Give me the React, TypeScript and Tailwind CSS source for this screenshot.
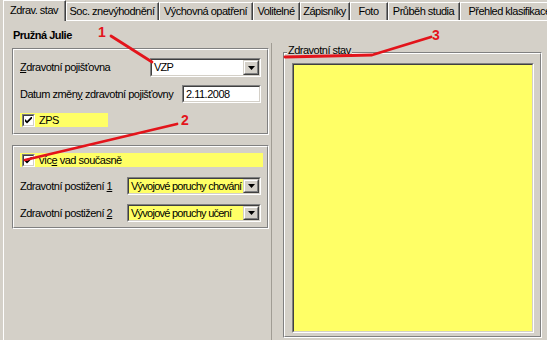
import React from "react";

const Check = () => (
  <div className="w-[13px] h-[13px] shrink-0 border-t border-l border-t-[#808080] border-l-[#808080] border-b border-r border-b-white border-r-white">
    <div className="w-full h-full border-t border-l border-t-[#404040] border-l-[#404040] border-b border-r border-b-[#d4d0c8] border-r-[#d4d0c8] bg-white flex items-center justify-center">
      <svg width="7" height="7" viewBox="0 0 7 7">
        <path d="M0 2 L2 4 L7 -1 L7 1.5 L2 6.5 L0 4.5 Z" fill="#000" />
      </svg>
    </div>
  </div>
);

const Sunken = ({ className = "", inner = "", children }: { className?: string; inner?: string; children?: React.ReactNode }) => (
  <div className={"border-t border-l border-t-[#808080] border-l-[#808080] border-b border-r border-b-white border-r-white " + className}>
    <div className={"w-full h-full border-t border-l border-t-[#404040] border-l-[#404040] border-b border-r border-b-[#d4d0c8] border-r-[#d4d0c8] " + inner}>
      {children}
    </div>
  </div>
);

const DropBtn = () => (
  <div className="w-[16px] h-full shrink-0 border-t border-l border-t-[#d4d0c8] border-l-[#d4d0c8] border-b border-r border-b-[#404040] border-r-[#404040]">
    <div className="w-full h-full bg-[#d4d0c8] border-t border-l border-t-white border-l-white border-b border-r border-b-[#808080] border-r-[#808080] flex items-center justify-center">
      <svg width="7" height="4" viewBox="0 0 7 4">
        <path d="M0 0 H7 L3.5 4 Z" fill="#000" />
      </svg>
    </div>
  </div>
);

const Combo = ({ text, w, h, bg }: { text: string; w: string; h: string; bg: string }) => (
  <Sunken className={w + " " + h} inner={"flex " + bg}>
    <div className="flex-1 overflow-hidden whitespace-nowrap pl-[2px] flex items-center tracking-[-0.75px]">{text}</div>
    <DropBtn />
  </Sunken>
);

const Etched = ({ className = "", children }: { className?: string; children?: React.ReactNode }) => (
  <div className={"relative border-t border-l border-t-[#808080] border-l-[#808080] border-b border-r border-b-white border-r-white " + className}>
    <div className="w-full h-full border-t border-l border-t-white border-l-white border-b border-r border-b-[#808080] border-r-[#808080] flex flex-col">
      {children}
    </div>
  </div>
);

const Tab = ({ label, w }: { label: string; w: string }) => (
  <div className={"mt-[2px] h-[18px] shrink-0 border-l border-t border-l-white border-t-white border-r border-r-[#404040] flex " + w}>
    <div className="flex-1 border-r border-r-[#808080] flex items-center justify-center whitespace-nowrap overflow-hidden">{label}</div>
  </div>
);

export default function App() {
  return (
    <div className="relative w-[547px] h-[340px] overflow-hidden bg-[#d4d0c8] text-black font-['Liberation_Sans',Arial,sans-serif] text-[11px] leading-[13px] tracking-[-0.5px] flex flex-col">
      {/* Tabs */}
      <div className="h-[20px] flex items-start shrink-0 relative z-10">
        <div className="ml-[3px] w-[63px] h-[21px] shrink-0 bg-[#d4d0c8] border-l border-t border-l-white border-t-white border-r border-r-[#404040] flex">
          <div className="flex-1 border-r border-r-[#808080] flex items-start justify-center pt-[3px] whitespace-nowrap">Zdrav. stav</div>
        </div>
        <Tab label="Soc. znevýhodnění" w="w-[93px]" />
        <Tab label="Výchovná opatření" w="w-[94px]" />
        <Tab label="Volitelné" w="w-[47px]" />
        <Tab label="Zápisníky" w="w-[50px]" />
        <Tab label="Foto" w="w-[38px]" />
        <Tab label="Průběh studia" w="w-[72px]" />
        <Tab label="Přehled klasifikace" w="w-[100px]" />
      </div>

      {/* Body */}
      <div className="flex-1 ml-[3px] border-l border-t border-white flex">
        {/* Left column */}
        <div className="w-[267px] shrink-0 pl-[8px] flex flex-col">
          <div className="ml-[1px] mt-[8px] font-bold h-[13px]">Pružná Julie</div>

          <Etched className="mt-[6px] w-[257px] h-[87px]">
            <div className="pl-[6px] pr-[6px] pt-[8px] flex flex-col">
              <div className="flex items-center h-[19px]">
                <div className="flex-1">
                  <span className="underline">Z</span>dravotní pojišťovna
                </div>
                <Combo text="VZP" w="w-[111px]" h="h-[19px]" bg="bg-white" />
              </div>
              <div className="mt-[8px] flex items-center h-[18px]">
                <div className="flex-1">
                  Datum změn<span className="underline">y</span> zdravotní pojišťovny
                </div>
                <Sunken className="w-[79px] h-[18px]" inner="bg-white flex items-center pl-[2px]">
                  2.11.2008
                </Sunken>
              </div>
              <div className="mt-[10px] h-[14px] w-[88px] bg-[#ffff66] flex items-center pl-[2px] gap-[4px]">
                <Check />
                <span>ZPS</span>
              </div>
            </div>
          </Etched>

          <Etched className="mt-[10px] w-[257px] h-[84px]">
            <div className="pl-[6px] pr-[6px] pt-[6px] flex flex-col">
              <div className="h-[14px] w-[243px] bg-[#ffff66] flex items-center pl-[2px] gap-[4px]">
                <Check />
                <span>
                  víc<span className="underline">e</span> vad současně
                </span>
              </div>
              <div className="mt-[10px] flex items-center h-[18px]">
                <div className="flex-1">
                  Zdravotní postižení <span className="underline">1</span>
                </div>
                <Combo text="Vývojové poruchy chování" w="w-[134px]" h="h-[18px]" bg="bg-[#ffff66]" />
              </div>
              <div className="mt-[9px] flex items-center h-[18px]">
                <div className="flex-1">
                  Zdravotní postižení <span className="underline">2</span>
                </div>
                <Combo text="Vývojové poruchy učení" w="w-[134px]" h="h-[18px]" bg="bg-[#ffff66]" />
              </div>
            </div>
          </Etched>
        </div>

        {/* Right column */}
        <div className="flex-1 flex">
          <div className="w-[1px] mt-[22px] bg-[#a09c94] self-stretch" />
          <div className="ml-[11px] mt-[31px]">
            <Etched className="w-[259px] h-[286px]">
              <div className="absolute left-[3px] top-[-9px] px-[1px] bg-[#d4d0c8] h-[13px] whitespace-nowrap">Zdravotní stav</div>
              <div className="flex-1 flex ml-[7px] mt-[9px] mr-[6px] mb-[3px]">
                <Sunken className="flex-1" inner="bg-[#ffff66]" />
              </div>
            </Etched>
          </div>
        </div>
      </div>

      {/* Red annotations overlay */}
      <svg className="absolute inset-0 pointer-events-none" width="547" height="340" viewBox="0 0 547 340">
        <g stroke="#e3141b" strokeWidth="2.8" fill="none" strokeLinecap="round" strokeLinejoin="round">
          <line x1="111" y1="36" x2="152" y2="62" />
          <line x1="177" y1="124" x2="25" y2="160" />
          <polyline points="431,37 372,55 285,57" />
        </g>
      </svg>
      <span className="absolute left-[98px] top-[25px] text-[14px] leading-[14px] font-bold text-[#e3141b] tracking-normal">1</span>
      <span className="absolute left-[181px] top-[113px] text-[14px] leading-[14px] font-bold text-[#e3141b] tracking-normal">2</span>
      <span className="absolute left-[432px] top-[28px] text-[14px] leading-[14px] font-bold text-[#e3141b] tracking-normal">3</span>
    </div>
  );
}
